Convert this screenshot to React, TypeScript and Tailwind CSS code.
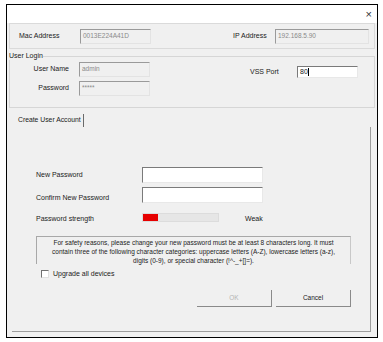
import React from 'react';

const font = { fontFamily: '"Liberation Sans", Arial, sans-serif' };

const GrayInput: React.FC<{ value: string; className?: string }> = ({ value, className }) => (
  <div
    className={`h-[15px] bg-[#f0f0f0] border-t border-l border-[#9a9a9a] border-r-[#e3e3e3] border-b-[#e3e3e3] border-r border-b pl-[2px] text-[6.5px] leading-[12px] text-[#8a8a8a] ${className || ''}`}
  >
    {value}
  </div>
);

const WhiteInput: React.FC<{ className?: string; children?: React.ReactNode }> = ({ className, children }) => (
  <div
    className={`bg-white border-t border-l border-[#7a7a7a] border-r border-b border-r-[#e8e8e8] border-b-[#e8e8e8] ${className || ''}`}
  >
    {children}
  </div>
);

export default function App() {
  return (
    <div className="w-[383px] h-[342px] bg-white pt-[4px] pl-[6px]" style={font}>
      <div className="w-[372px] h-[334px] border border-black bg-[#f0f0f0] flex flex-col text-[7px] text-[#1a1a1a]">
        {/* title bar */}
        <div className="h-[18px] bg-white flex items-center justify-end pr-[5px] shrink-0">
          <span className="text-[11px] leading-none text-[#333] font-light">×</span>
        </div>

        {/* mac / ip row */}
        <div className="ml-[2px] mr-[2px] h-[26px] border border-[#dadada] flex items-center shrink-0">
          <span className="ml-[9px] w-[61px]">Mac Address</span>
          <GrayInput value="0013E224A41D" className="w-[71px]" />
          <span className="ml-[82px] w-[42px]">IP Address</span>
          <GrayInput value="192.168.5.90" className="w-[94px]" />
        </div>

        {/* user login */}
        <fieldset className="ml-[2px] mr-[2px] mt-[3px] h-[56px] border border-[#d6d6d6] px-0 shrink-0">
          <legend className="ml-[-1px] px-0 text-[7px] leading-[8px]">User Login</legend>
          <div className="flex">
            <div className="flex flex-col">
              <div className="flex items-center mt-[2px]">
                <span className="w-[59px] text-right">User Name</span>
                <GrayInput value="admin" className="ml-[10px] w-[71px] h-[14px]" />
              </div>
              <div className="flex items-center mt-[4px]">
                <span className="w-[59px] text-right">Password</span>
                <GrayInput value="*****" className="ml-[10px] w-[71px] h-[14px]" />
              </div>
            </div>
            <div className="flex items-center ml-[100px] mt-[6px] self-start">
              <span className="w-[47px]">VSS Port</span>
              <WhiteInput className="w-[61px] h-[12px] pl-[2px] text-[7px] leading-[10px]">
                80<span className="inline-block w-[1px] h-[8px] bg-black align-middle ml-[0.5px]" />
              </WhiteInput>
            </div>
          </div>
        </fieldset>

        {/* tab header */}
        <div className="mt-[5px] ml-[11px] flex items-center h-[14px] shrink-0">
          <span className="text-[6.8px] mt-[1px]">Create User Account</span>
          <span className="ml-[2px] w-[1px] h-[13px] bg-[#6a6a6a] self-end" />
        </div>

        {/* tab panel */}
        <div className="ml-[5px] mr-[6px] h-[205px] border-r border-b border-[#9c9c9c] flex flex-col shrink-0">
          <div className="flex items-center mt-[40px]">
            <span className="ml-[24px] w-[106px] pt-[1px]">New Password</span>
            <WhiteInput className="w-[121px] h-[16px]" />
          </div>
          <div className="flex items-center mt-[4px]">
            <span className="ml-[24px] w-[106px] pt-[6px]">Confirm New Password</span>
            <WhiteInput className="w-[121px] h-[16px]" />
          </div>
          <div className="flex items-center mt-[7px]">
            <span className="ml-[24px] w-[106px] pt-[3px]">Password strength</span>
            <div className="w-[77px] h-[9px] bg-[#e6e6e6] border border-[#dcdcdc] flex">
              <div className="w-[15px] h-full bg-[#e60000]" />
            </div>
            <span className="ml-[26px] pt-[3px]">Weak</span>
          </div>
          <div className="ml-[24px] mt-[12px] w-[315px] h-[28px] border-t border-l border-r border-[#a8a8a8] border-r-[#c8c8c8] text-center text-[6.5px] leading-[9px] pt-[1px] text-[#222]">
            For safety reasons, please change your new password must be at least 8 characters long. It must
            <br />
            contain three of the following character categories: uppercase letters (A-Z), lowercase letters (a-z),
            <br />
            digits (0-9), or special character (!^-_+[]{}=).
          </div>
          <div className="flex items-center ml-[29px] mt-[5px]">
            <span className="w-[8px] h-[8px] border-t border-l border-[#707070] border-r border-b border-r-[#e0e0e0] border-b-[#e0e0e0] bg-white" />
            <span className="ml-[4px] text-[7px]">Upgrade all devices</span>
          </div>
          <div className="flex mt-[10px] ml-[185px]">
            <div className="w-[75px] h-[17px] bg-[#f0f0f0] border-r border-b border-[#8a8a8a] flex items-center justify-center text-[#b5b5b5] text-[6.5px]">
              OK
            </div>
            <div className="ml-[4px] w-[75px] h-[17px] bg-[#f0f0f0] border-r border-b border-[#8a8a8a] flex items-center justify-center text-[6.5px]">
              Cancel
            </div>
          </div>
        </div>
      </div>
    </div>
  );
}
